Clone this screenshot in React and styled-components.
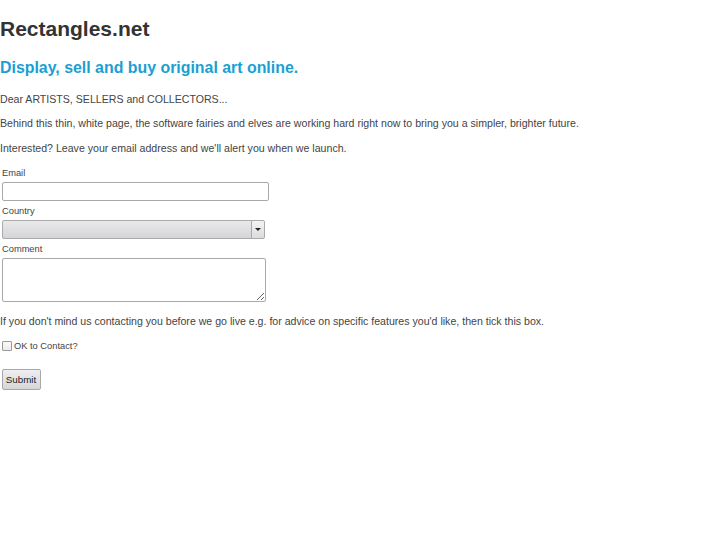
import React from "react";
import styled, { createGlobalStyle } from "styled-components";

const Global = createGlobalStyle`
  html, body { margin: 0; padding: 0; background: #fff; }
  body { font-family: "Liberation Sans", Arial, Helvetica, sans-serif; color: #444; }
`;

const Page = styled.div`
  padding: 0;
  display: flow-root;
`;

const Title = styled.h1`
  margin: 15px 0 0;
  font-size: 21px;
  line-height: 28px;
  font-weight: bold;
  color: #333;
`;

const Tagline = styled.h2`
  margin: 15px 0 0;
  font-size: 15.9px;
  line-height: 20px;
  font-weight: bold;
  color: #1b9fd3;
`;

const Para = styled.p`
  margin: ${(p) => p.$top ?? 11.5}px 0 0;
  font-size: 10.6px;
  line-height: 13px;
  color: #444;
`;

const Form = styled.form`
  display: flex;
  flex-direction: column;
  align-items: flex-start;
  margin-top: 13px;
`;

const Label = styled.label`
  display: block;
  font-size: 9.3px;
  line-height: 11px;
  color: #444;
  margin: ${(p) => p.$top ?? 0}px 0 0 2px;
`;

const TextInput = styled.input`
  appearance: none;
  box-sizing: border-box;
  width: 267px;
  height: 19px;
  margin: 3px 0 0 2px;
  border: 1px solid #a9a9a9;
  border-radius: 2px;
  background: #fff;
  padding: 0 3px;
  font: 11px "Liberation Sans", Arial, sans-serif;
`;

const SelectWrap = styled.div`
  box-sizing: border-box;
  width: 263px;
  height: 19px;
  margin: 3px 0 0 2px;
  border: 1px solid #aaa;
  border-radius: 2px;
  background: linear-gradient(#e9e9eb, #d5d5d8);
  display: flex;
`;

const SelectField = styled.select`
  appearance: none;
  flex: 1;
  border: 0;
  background: transparent;
  font: 11px "Liberation Sans", Arial, sans-serif;
  outline: none;
`;

const SelectButton = styled.span`
  width: 12px;
  border-left: 1px solid #aaa;
  background: linear-gradient(#f3f3f4, #dcdcde);
  border-radius: 0 2px 2px 0;
  display: flex;
  align-items: center;
  justify-content: center;
  pointer-events: none;
`;

const Arrow = styled.span`
  width: 0;
  height: 0;
  border-left: 3px solid transparent;
  border-right: 3px solid transparent;
  border-top: 3px solid #222;
`;

const TextArea = styled.textarea`
  box-sizing: border-box;
  width: 264px;
  height: 44px;
  margin: 3px 0 0 2px;
  border: 1px solid #a9a9a9;
  border-radius: 2px;
  background: #fff;
  resize: both;
  font: 11px "Liberation Sans", Arial, sans-serif;
`;

const CheckRow = styled.label`
  display: flex;
  align-items: center;
  gap: 2px;
  height: 11px;
  margin: 13px 0 0 2px;
  font-size: 9.3px;
  line-height: 11px;
  color: #444;
`;

const Check = styled.input`
  appearance: none;
  box-sizing: border-box;
  width: 10px;
  height: 10px;
  margin: 0;
  border: 1px solid #9a9a9a;
  border-radius: 1px;
  background: linear-gradient(#fafafa, #ececec);
`;

const Submit = styled.button`
  box-sizing: border-box;
  margin: 17.5px 0 0 1.5px;
  width: 39px;
  height: 21px;
  padding: 0;
  border: 1px solid #a8a8a8;
  border-radius: 2px;
  background: linear-gradient(#efeff1, #d6d6d9);
  font: 9.8px "Liberation Sans", Arial, sans-serif;
  color: #222;
`;

export default function App() {
  return (
    <Page>
      <Global />
      <Title>Rectangles.net</Title>
      <Tagline>Display, sell and buy original art online.</Tagline>
      <Para $top={14.5}>Dear ARTISTS, SELLERS and COLLECTORS...</Para>
      <Para>
        Behind this thin, white page, the software fairies and elves are working hard right now to bring you a
        simpler, brighter future.
      </Para>
      <Para>Interested? Leave your email address and we'll alert you when we launch.</Para>
      <Form onSubmit={(e) => e.preventDefault()}>
        <Label htmlFor="email">Email</Label>
        <TextInput id="email" type="text" />
        <Label htmlFor="country" $top={5}>Country</Label>
        <SelectWrap>
          <SelectField id="country" defaultValue="">
            <option value=""></option>
          </SelectField>
          <SelectButton>
            <Arrow />
          </SelectButton>
        </SelectWrap>
        <Label htmlFor="comment" $top={5}>Comment</Label>
        <TextArea id="comment" />
        <Para $top={13}>
          If you don't mind us contacting you before we go live e.g. for advice on specific features you'd like,
          then tick this box.
        </Para>
        <CheckRow>
          <Check type="checkbox" />
          OK to Contact?
        </CheckRow>
        <Submit type="submit">Submit</Submit>
      </Form>
    </Page>
  );
}
